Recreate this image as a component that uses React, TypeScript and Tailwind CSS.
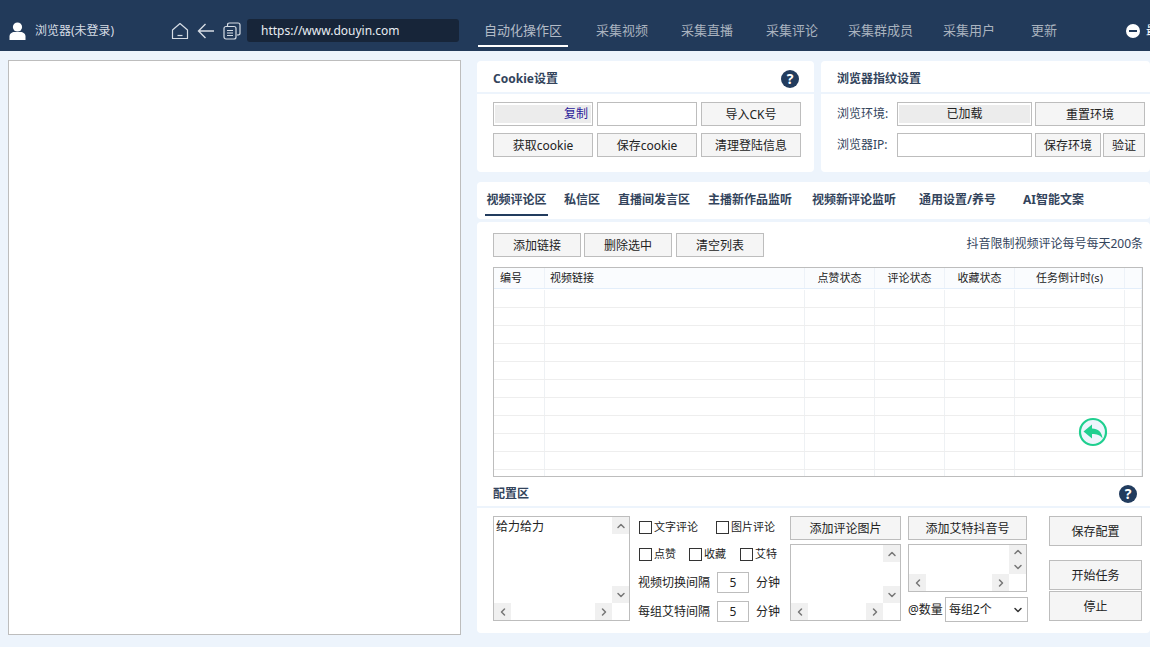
import { ReactNode } from "react";
import { ChevronDown, ChevronLeft, ChevronRight, ChevronUp } from "lucide-react";

const font = { fontFamily: '"Noto Sans", "Noto Sans CJK SC", sans-serif' };

const navItems = [
  { label: "采集视频", cls: "ml-[28px]" },
  { label: "采集直播", cls: "ml-[33px]" },
  { label: "采集评论", cls: "ml-[33px]" },
  { label: "采集群成员", cls: "ml-[30px]" },
  { label: "采集用户", cls: "ml-[30px]" },
  { label: "更新", cls: "ml-[36px]" },
];

const subTabs = [
  { label: "视频评论区", cls: "w-[63px] ml-[8px]", active: true },
  { label: "私信区", cls: "ml-[16px]" },
  { label: "直播间发言区", cls: "ml-[18px]" },
  { label: "主播新作品监听", cls: "ml-[18px]" },
  { label: "视频新评论监听", cls: "ml-[20px]" },
  { label: "通用设置/养号", cls: "ml-[23px]" },
  { label: "AI智能文案", cls: "ml-[27px]" },
];

const columns = [
  { label: "编号", cls: "w-[51px] pl-[6px] text-left" },
  { label: "视频链接", cls: "w-[260px] pl-[5px] text-left" },
  { label: "点赞状态", cls: "w-[70px] text-center" },
  { label: "评论状态", cls: "w-[70px] text-center" },
  { label: "收藏状态", cls: "w-[70px] text-center" },
  { label: "任务倒计时(s)", cls: "w-[110px] text-center" },
  { label: "", cls: "flex-1" },
];

function Btn({ children, className = "" }: { children: ReactNode; className?: string }) {
  return (
    <button className={`flex items-center justify-center border border-[#bdbdbd] bg-[#f5f5f5] pt-[1px] text-[12px] text-[#222] ${className}`}>
      {children}
    </button>
  );
}

function Help() {
  return (
    <span className="flex h-[18px] w-[18px] items-center justify-center rounded-full bg-[#223c5e] text-[14px] leading-none font-bold text-white">
      ?
    </span>
  );
}

function CardTitle({ children, right }: { children: ReactNode; right?: ReactNode }) {
  return (
    <div className="flex h-[33px] items-center justify-between border-b-2 border-[#edf4fc] pt-[5px] pr-[15px] pl-[16px] text-[12px] font-bold text-[#33445c]">
      <span>{children}</span>
      {right}
    </div>
  );
}

function ScrollBtn({ children }: { children: ReactNode }) {
  return <div className="flex h-[17px] w-[17px] items-center justify-center bg-[#f0f0f0] text-[#777]">{children}</div>;
}

// fake win32 list box with its two scroll bars
function ListBox({ className = "", text }: { className?: string; text?: string }) {
  return (
    <div className={`flex flex-col border border-[#bdbdbd] bg-white ${className}`}>
      <div className="flex min-h-0 flex-1">
        <div className="flex-1 pt-[1px] pl-[2px] text-[12px] leading-[17px] text-[#222]">{text}</div>
        <div className="flex w-[17px] flex-col justify-between">
          <ScrollBtn><ChevronUp size={12} strokeWidth={3} /></ScrollBtn>
          <ScrollBtn><ChevronDown size={12} strokeWidth={3} /></ScrollBtn>
        </div>
      </div>
      <div className="flex h-[17px]">
        <div className="flex flex-1 justify-between">
          <ScrollBtn><ChevronLeft size={12} strokeWidth={3} /></ScrollBtn>
          <ScrollBtn><ChevronRight size={12} strokeWidth={3} /></ScrollBtn>
        </div>
        <div className="w-[17px]" />
      </div>
    </div>
  );
}

function Check({ label, className = "" }: { label: string; className?: string }) {
  return (
    <label className={`flex items-center gap-[2px] text-[11px] text-[#222] ${className}`}>
      <span className="h-[13px] w-[13px] border border-[#333] bg-white" />
      {label}
    </label>
  );
}

function Interval({ label, className = "" }: { label: string; className?: string }) {
  return (
    <div className={`flex h-[21px] items-center text-[12px] text-[#222] ${className}`}>
      <span className="w-[79px] whitespace-nowrap">{label}</span>
      <span className="flex h-[21px] w-[32px] items-center justify-center border border-[#bdbdbd] bg-white">5</span>
      <span className="ml-[7px]">分钟</span>
    </div>
  );
}

export default function App() {
  return (
    <div className="h-[647px] w-[1150px] overflow-hidden bg-[#edf4fc]" style={font}>
      {/* header */}
      <div className="flex h-[51px] items-end overflow-hidden bg-[#223a5a] pb-[4px] whitespace-nowrap">
        <div className="flex h-[34px] shrink-0 items-center pt-[2px] pl-[9px] text-white">
          <svg width="17" height="18" viewBox="0 0 17 18" fill="currentColor">
            <circle cx="8.5" cy="5" r="4.6" />
            <path d="M0.5 18 V14.5 C0.5 11.5 3 10 5.5 10 H11.5 C14 10 16.5 11.5 16.5 14.5 V18 Z" />
          </svg>
          <span className="ml-[9px] w-[136px] text-[12px] text-[#d6dce4]">浏览器(未登录)</span>
        </div>
        <div className="flex h-[34px] shrink-0 items-center gap-[8px] pt-[2px] text-[#d6dce4]">
          <svg width="18" height="18" viewBox="0 0 18 18" fill="none" stroke="currentColor" strokeWidth="1.2">
            <path d="M9 1.5 L16.5 8 V16.5 H1.5 V8 Z" strokeLinejoin="round" />
            <path d="M6.5 13.5 H11.5" />
          </svg>
          <svg width="18" height="18" viewBox="0 0 18 18" fill="none" stroke="currentColor" strokeWidth="1.4">
            <path d="M17 9 H2 M8.5 2 L1.5 9 L8.5 16" />
          </svg>
          <svg width="18" height="18" viewBox="0 0 18 18" fill="none" stroke="currentColor" strokeWidth="1.2">
            <rect x="1" y="4.5" width="12" height="12.5" rx="2" />
            <path d="M4.5 4 V3 Q4.5 1 6.5 1 H15 Q17 1 17 3 V11.5 Q17 13 14 13" />
            <path d="M4 8.5 H10 M4 11 H10 M4 13.5 H10" />
          </svg>
        </div>
        <div className="mb-[5px] ml-[6px] flex h-[23px] w-[212px] shrink-0 items-center self-end rounded-[3px] bg-[#172539] pl-[14px] text-[12px] text-[#e8edf3]">
          https://www.douyin.com
        </div>
        <div className="ml-[19px] flex h-[34px] w-[90px] shrink-0 items-center justify-center self-end border-b-2 border-white pt-[3px] text-[13px] text-[#b4bcc7]">
          自动化操作区
        </div>
        {navItems.map((n) => (
          <span key={n.label} className={`flex h-[34px] shrink-0 items-center pt-[3px] pb-[2px] text-[13px] text-[#aab3bf] ${n.cls}`}>
            {n.label}
          </span>
        ))}
        <div className="ml-[69px] flex h-[34px] shrink-0 items-center pt-[3px] pb-[2px]">
          <span className="flex h-[14px] w-[14px] items-center justify-center rounded-full bg-white">
            <span className="h-[2px] w-[8px] bg-[#223a5a]" />
          </span>
          <span className="ml-[6px] text-[12px] text-white">最</span>
        </div>
      </div>

      <div className="flex items-start">
        {/* browser view */}
        <div className="mt-[9px] ml-[8px] h-[575px] w-[453px] shrink-0 border border-[#bdbdbd] bg-white" />

        <div className="mt-[10px] ml-[16px] w-[673px] shrink-0">
          <div className="flex h-[111px] gap-[7px]">
            {/* cookie settings */}
            <div className="w-[337px] rounded-[4px] bg-white">
              <CardTitle right={<Help />}>Cookie设置</CardTitle>
              <div className="mt-[8px] ml-[16px] grid w-[308px] grid-cols-[100px_100px_100px] gap-x-[4px] gap-y-[7px]">
                <div className="flex h-[24px] items-center border border-[#bdbdbd] bg-white p-[1px]">
                  <span className="flex h-[18px] w-full items-center justify-end bg-[#ececec] pr-[3px] text-[12px] text-[#2a1a9a]">复制</span>
                </div>
                <div className="h-[24px] border border-[#bdbdbd] bg-white" />
                <Btn className="h-[24px]">导入CK号</Btn>
                <Btn className="h-[24px]">获取cookie</Btn>
                <Btn className="h-[24px]">保存cookie</Btn>
                <Btn className="h-[24px]">清理登陆信息</Btn>
              </div>
            </div>
            {/* fingerprint settings */}
            <div className="flex-1 rounded-[4px] bg-white">
              <CardTitle>浏览器指纹设置</CardTitle>
              <div className="mt-[8px] ml-[16px] flex flex-col gap-[7px] text-[12px] text-[#33445c]">
                <div className="flex h-[24px] items-center">
                  <span className="w-[60px]">浏览环境:</span>
                  <div className="flex h-[24px] w-[135px] items-center border border-[#bdbdbd] p-[1px]">
                    <span className="flex h-[18px] w-full items-center justify-center bg-[#ececec] text-[#222]">已加载</span>
                  </div>
                  <Btn className="ml-[3px] h-[24px] w-[110px]">重置环境</Btn>
                </div>
                <div className="flex h-[24px] items-center">
                  <span className="w-[60px]">浏览器IP:</span>
                  <div className="h-[24px] w-[135px] border border-[#bdbdbd]" />
                  <Btn className="ml-[3px] h-[24px] w-[66px]">保存环境</Btn>
                  <Btn className="ml-[2px] h-[24px] w-[42px]">验证</Btn>
                </div>
              </div>
            </div>
          </div>

          {/* sub tabs */}
          <div className="mt-[10px] flex h-[37px] rounded-[4px] bg-white text-[12px] font-bold text-[#33445c]">
            {subTabs.map((t) =>
              t.active ? (
                <span key={t.label} className={`flex h-[34px] items-center justify-center border-b-2 border-[#223c5e] pt-[3px] ${t.cls}`}>
                  {t.label}
                </span>
              ) : (
                <span key={t.label} className={`flex h-[34px] items-center pt-[3px] pb-[2px] ${t.cls}`}>
                  {t.label}
                </span>
              ),
            )}
          </div>

          <div className="mt-[3px] h-[411px] rounded-[4px] bg-white">
            {/* toolbar */}
            <div className="flex h-[35px] items-end pr-[7px] pl-[16px]">
              <Btn className="h-[24px] w-[88px]">添加链接</Btn>
              <Btn className="ml-[3px] h-[24px] w-[88px]">删除选中</Btn>
              <Btn className="ml-[4px] h-[24px] w-[88px]">清空列表</Btn>
              <span className="mb-[4px] ml-auto text-[12px] text-[#33445c]">抖音限制视频评论每号每天200条</span>
            </div>

            {/* task table */}
            <div className="relative mt-[10px] ml-[16px] h-[210px] w-[650px] overflow-hidden border border-[#bdbdbd] bg-white">
              <div className="flex h-[21px] border-b border-[#e3eefa] bg-[#fafcfe] text-[11px] text-[#222]">
                {columns.map((c, i) => (
                  <div key={i} className={`flex h-full items-center border-r border-[#edf2f8] pt-[1px] ${c.cls}`}>
                    <span className={c.cls.includes("center") ? "w-full" : ""}>{c.label}</span>
                  </div>
                ))}
              </div>
              {Array.from({ length: 11 }).map((_, r) => (
                <div key={r} className={`flex border-b border-[#eeeeee] ${r === 0 ? "mt-[1px] h-[18px]" : "h-[18px]"}`}>
                  {columns.map((c, i) => (
                    <div key={i} className={`h-full border-r border-[#eef1f4] ${c.cls}`} />
                  ))}
                </div>
              ))}
              <svg width="30" height="30" viewBox="0 0 30 30" className="absolute top-[149px] left-[584px]">
                <circle cx="15" cy="15" r="13" fill="#eef5fc" stroke="#1fcf8f" strokeWidth="2.2" />
                <path d="M5.5 14.5 L14 7.5 V11.5 C20 11.5 24 15 24.5 21.5 C22 18 19 17 14 17 V21.5 Z" fill="#1fcf8f" />
              </svg>
            </div>

            {/* config */}
            <div className="mt-[3px] flex h-[28px] items-center justify-between border-b-2 border-[#edf4fc] pt-[2px] pr-[13px] pl-[16px] text-[12px] font-bold text-[#33445c]">
              <span>配置区</span>
              <Help />
            </div>
            <div className="mt-[8px] flex items-start pl-[16px]">
              <ListBox text="给力给力" className="h-[105px] w-[137px]" />
              <div className="ml-[8px] w-[145px]">
                <div className="mt-[1px] flex h-[21px] items-center pl-[1px]">
                  <Check label="文字评论" />
                  <Check label="图片评论" className="ml-[18px]" />
                </div>
                <div className="mt-[6px] flex h-[21px] items-center pl-[1px]">
                  <Check label="点赞" />
                  <Check label="收藏" className="ml-[13px]" />
                  <Check label="艾特" className="ml-[14px]" />
                </div>
                <Interval label="视频切换间隔" className="mt-[7px]" />
                <Interval label="每组艾特间隔" className="mt-[8px]" />
              </div>
              <div className="ml-[7px] w-[111px]">
                <Btn className="h-[24px] w-full">添加评论图片</Btn>
                <ListBox className="mt-[4px] h-[77px]" />
              </div>
              <div className="ml-[7px] w-[120px]">
                <Btn className="h-[24px] w-[119px]">添加艾特抖音号</Btn>
                <ListBox className="mt-[4px] h-[48px] w-[119px]" />
                <div className="mt-[5px] flex items-center text-[12px] text-[#222]">
                  <span className="w-[37px] whitespace-nowrap">@数量</span>
                  <div className="flex h-[25px] w-[83px] items-center justify-between border border-[#bdbdbd] pr-[3px] pl-[3px]">
                    每组2个
                    <ChevronDown size={12} strokeWidth={3} className="text-[#333]" />
                  </div>
                </div>
              </div>
              <div className="ml-[21px] w-[93px]">
                <Btn className="h-[30px] w-full">保存配置</Btn>
                <Btn className="mt-[14px] h-[30px] w-full">开始任务</Btn>
                <Btn className="mt-[1px] h-[30px] w-full">停止</Btn>
              </div>
            </div>
          </div>
        </div>
      </div>
    </div>
  );
}
